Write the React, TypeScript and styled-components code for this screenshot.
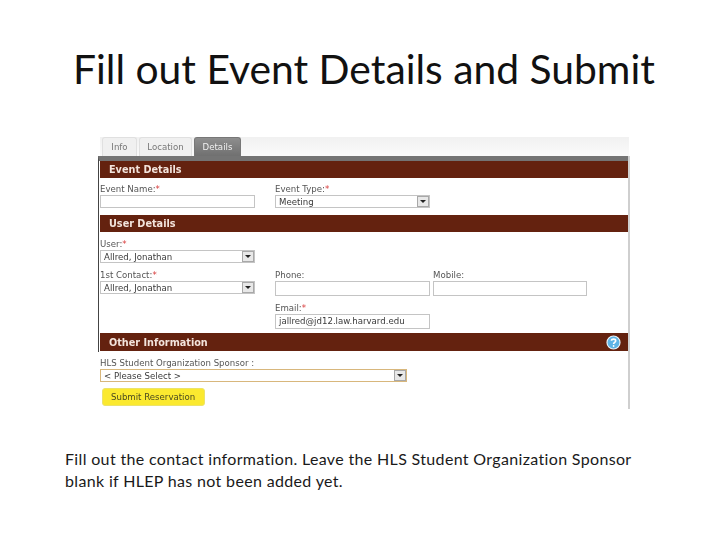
import styled, { createGlobalStyle } from "styled-components";

const GlobalStyle = createGlobalStyle`
    html, body {
        margin: 0;
        padding: 0;
        background: #ffffff;
    }
`;

const Slide = styled.div`
    width: 728px;
    height: 546px;
    overflow: hidden;
    background: #ffffff;
    font-family: "Lato", "Liberation Sans", sans-serif;
`;

const Title = styled.h1`
    margin: 0;
    height: 137px;
    padding-top: 42px;
    padding-left: 73px;
    box-sizing: border-box;
    font-size: 40.8px;
    line-height: 54px;
    font-weight: 400;
    color: #111111;
    white-space: nowrap;
`;

const Shot = styled.div`
    width: 532px;
    height: 272px;
    margin-left: 98px;
    box-sizing: border-box;
    padding-left: 2px;
    font-family: "DejaVu Sans", sans-serif;
    font-size: 8.6px;
    color: #555555;
    filter: blur(0.45px);
`;

const TabStrip = styled.div`
    display: flex;
    gap: 2px;
    height: 19px;
    margin-right: 1px;
    background: linear-gradient(to bottom, #f1f1f1, #fafafa);
    padding-left: 2px;
    box-sizing: border-box;
`;

const Tab = styled.div<{ $active?: boolean; $width: number }>`
    width: ${(p) => p.$width}px;
    height: 19px;
    box-sizing: border-box;
    line-height: 18px;
    text-align: center;
    border-radius: 3px 3px 0 0;
    border: 1px solid ${(p) => (p.$active ? "#777777" : "#e0e0e0")};
    border-bottom: none;
    color: ${(p) => (p.$active ? "#f2f2f2" : "#777777")};
    background: ${(p) =>
        p.$active ? "linear-gradient(to bottom, #8e8e8e, #707070)" : "#f0f0f0"};
`;

const Body = styled.div`
    height: 253px;
    margin-left: -2px;
    border-right: 2px solid #cfcfcf;
`;

const Upper = styled.div`
    height: 196px;
    border-left: 1px solid #444444;
    border-top: 5px solid #747474;
    box-sizing: border-box;
`;

const Bar = styled.div<{ $top?: number; $height?: number }>`
    position: relative;
    display: flex;
    align-items: center;
    height: ${(p) => p.$height ?? 17}px;
    margin: ${(p) => p.$top ?? 0}px 0 0 1px;
    padding: 0 7px 0 9px;
    background: #64220f;
    color: #f3e4dc;
    font-size: 9.7px;
    font-weight: 700;
`;

const HelpIcon = styled.svg`
    margin-left: auto;
    width: 15px;
    height: 15px;
`;

const Row = styled.div<{ $top: number; $height: number }>`
    display: grid;
    grid-template-columns: 155px 154px 154px;
    column-gap: 0;
    height: ${(p) => p.$height}px;
    margin-top: ${(p) => p.$top}px;
    padding-left: 1px;
`;

const Field = styled.div<{ $col?: number }>`
    grid-column: ${(p) => p.$col ?? 1};
    margin-left: ${(p) => (p.$col === 2 ? 20 : p.$col === 3 ? 24 : 0)}px;
    width: ${(p) => (p.$col === 3 ? 154 : 155)}px;
`;

const Label = styled.div`
    height: 12px;
    line-height: 12px;
    white-space: nowrap;
`;

const Star = styled.span`
    color: #d83a3a;
`;

const Input = styled.div<{ $height?: number }>`
    height: ${(p) => p.$height ?? 13}px;
    line-height: ${(p) => (p.$height ?? 13) - 2}px;
    box-sizing: border-box;
    border: 1px solid #c4c4c4;
    padding-left: 3px;
    color: #3a3a3a;
    background: #ffffff;
    white-space: nowrap;
`;

const Select = styled.div<{ $width?: number; $focus?: boolean }>`
    display: flex;
    align-items: center;
    justify-content: space-between;
    height: 13px;
    width: ${(p) => p.$width ?? 155}px;
    box-sizing: border-box;
    border: 1px solid ${(p) => (p.$focus ? "#d8b77c" : "#c4c4c4")};
    padding-left: 3px;
    color: #3a3a3a;
    background: #ffffff;
    white-space: nowrap;
`;

const Arrow = styled.span`
    display: flex;
    align-items: center;
    justify-content: center;
    width: 12px;
    height: 11px;
    box-sizing: border-box;
    border: 1px solid #a8a8a8;
    background: #e8e8e8;

    &::after {
        content: "";
        border-left: 3px solid transparent;
        border-right: 3px solid transparent;
        border-top: 3px solid #222222;
    }
`;

const Lower = styled.div`
    padding: 5px 0 0 2px;
`;

const SubmitButton = styled.div`
    width: 103px;
    height: 18px;
    margin: 6px 0 0 2px;
    box-sizing: border-box;
    border-radius: 3px;
    background: #fbe92f;
    border: 1px solid #ece36a;
    color: #4a4a20;
    line-height: 16px;
    padding-left: 8px;
`;

const Caption = styled.p`
    margin: 39px 0 0 65px;
    width: 575px;
    font-size: 16px;
    letter-spacing: 0.34px;
    line-height: 22px;
    color: #1a1a1a;
`;

const Help = () => (
    <HelpIcon viewBox="0 0 15 15">
        <circle cx="7.5" cy="7.5" r="6.5" fill="#5fb4e6" stroke="#e8f4fb" strokeWidth="1.2" />
        <path
            d="M5.4 5.8 C5.6 3.6 9.6 3.6 9.7 5.8 C9.7 7.4 7.6 7.3 7.6 9"
            fill="none"
            stroke="#ffffff"
            strokeWidth="1.6"
        />
        <circle cx="7.6" cy="11" r="0.9" fill="#ffffff" />
    </HelpIcon>
);

const Required = ({ children }: { children: string }) => (
    <Label>
        {children}
        <Star>*</Star>
    </Label>
);

export default function App() {
    return (
        <Slide>
            <GlobalStyle />
            <Title>Fill out Event Details and Submit</Title>
            <Shot>
                <TabStrip>
                    <Tab $width={35}>Info</Tab>
                    <Tab $width={53}>Location</Tab>
                    <Tab $width={47} $active>Details</Tab>
                </TabStrip>
                <Body>
                    <Upper>
                        <Bar>Event Details</Bar>
                        <Row $top={5} $height={25}>
                            <Field>
                                <Required>Event Name:</Required>
                                <Input />
                            </Field>
                            <Field $col={2}>
                                <Required>Event Type:</Required>
                                <Select>
                                    Meeting
                                    <Arrow />
                                </Select>
                            </Field>
                        </Row>
                        <Bar $top={7}>User Details</Bar>
                        <Row $top={6} $height={25}>
                            <Field>
                                <Required>User:</Required>
                                <Select>
                                    Allred, Jonathan
                                    <Arrow />
                                </Select>
                            </Field>
                        </Row>
                        <Row $top={6} $height={26}>
                            <Field>
                                <Required>1st Contact:</Required>
                                <Select>
                                    Allred, Jonathan
                                    <Arrow />
                                </Select>
                            </Field>
                            <Field $col={2}>
                                <Label>Phone:</Label>
                                <Input $height={15} />
                            </Field>
                            <Field $col={3}>
                                <Label>Mobile:</Label>
                                <Input $height={15} />
                            </Field>
                        </Row>
                        <Row $top={7} $height={27}>
                            <Field $col={2}>
                                <Required>Email:</Required>
                                <Input $height={15}>jallred@jd12.law.harvard.edu</Input>
                            </Field>
                        </Row>
                        <Bar $top={4} $height={18}>
                            Other Information
                            <Help />
                        </Bar>
                    </Upper>
                    <Lower>
                        <Label>HLS Student Organization Sponsor :</Label>
                        <Select $width={307} $focus>
                            {"< Please Select >"}
                            <Arrow />
                        </Select>
                        <SubmitButton>Submit Reservation</SubmitButton>
                    </Lower>
                </Body>
            </Shot>
            <Caption>
                Fill out the contact information. Leave the HLS Student Organization Sponsor blank if
                HLEP has not been added yet.
            </Caption>
        </Slide>
    );
}
